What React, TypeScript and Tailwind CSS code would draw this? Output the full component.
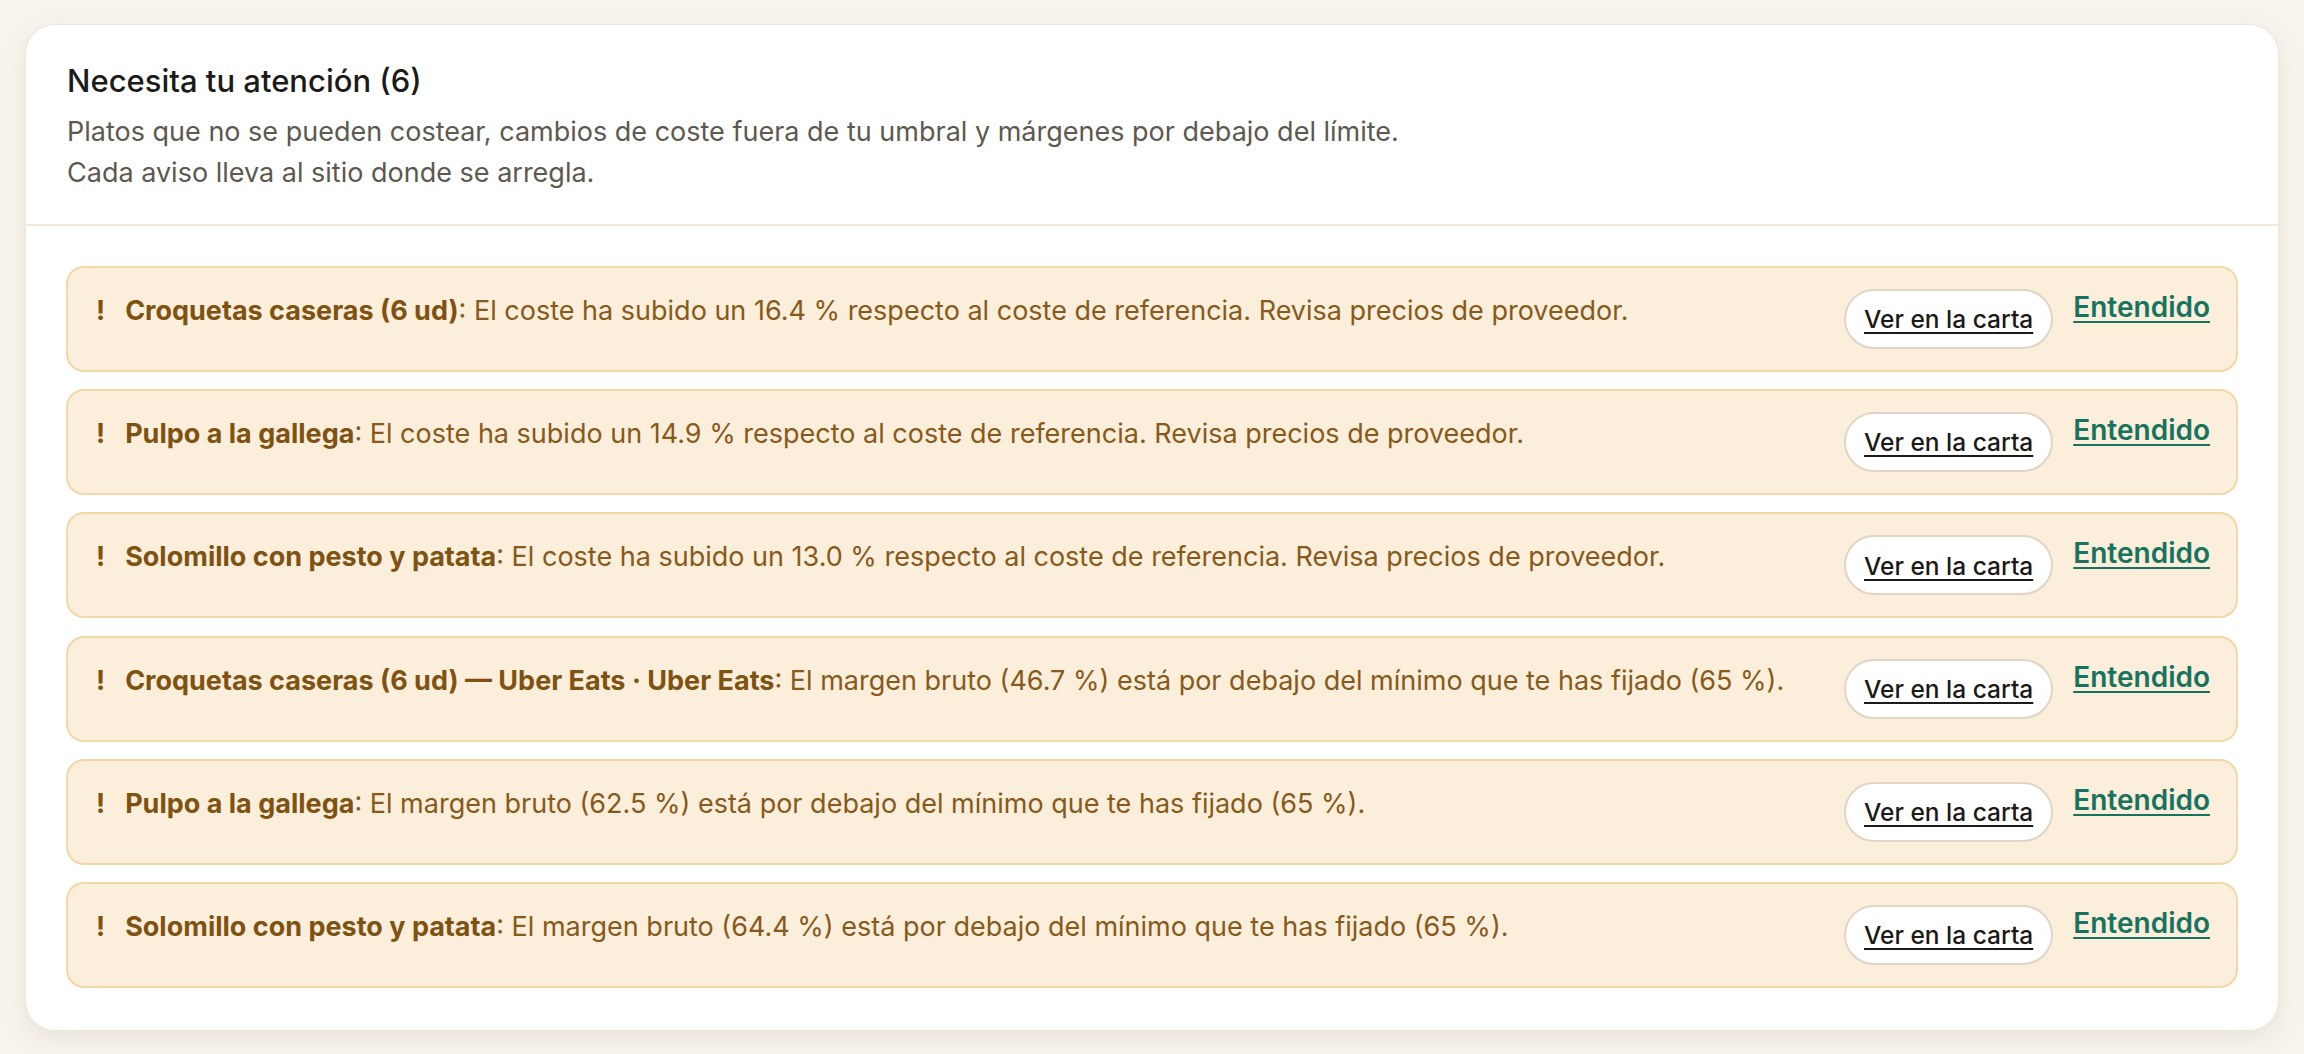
import React from "react";

type Alert = {
  dish: string;
  message: string;
};

const alerts: Alert[] = [
  {
    dish: "Croquetas caseras (6 ud)",
    message:
      "El coste ha subido un 16.4 % respecto al coste de referencia. Revisa precios de proveedor.",
  },
  {
    dish: "Pulpo a la gallega",
    message:
      "El coste ha subido un 14.9 % respecto al coste de referencia. Revisa precios de proveedor.",
  },
  {
    dish: "Solomillo con pesto y patata",
    message:
      "El coste ha subido un 13.0 % respecto al coste de referencia. Revisa precios de proveedor.",
  },
  {
    dish: "Croquetas caseras (6 ud) — Uber Eats · Uber Eats",
    message:
      "El margen bruto (46.7 %) está por debajo del mínimo que te has fijado (65 %).",
  },
  {
    dish: "Pulpo a la gallega",
    message:
      "El margen bruto (62.5 %) está por debajo del mínimo que te has fijado (65 %).",
  },
  {
    dish: "Solomillo con pesto y patata",
    message:
      "El margen bruto (64.4 %) está por debajo del mínimo que te has fijado (65 %).",
  },
];

function AlertRow({ alert }: { alert: Alert }) {
  return (
    <div className="flex items-start gap-[20px] rounded-[18px] border-2 border-[#f1d8a6] bg-[#fbeedb] py-[21px] pl-[28px] pr-[26px]">
      <p className="mt-[2px] flex-1 text-[27px] leading-[40.5px] text-[#88591a]">
        <span className="mr-[20px] font-bold text-[#7f5212]">!</span>
        <strong className="font-bold text-[#7f5212]">{alert.dish}</strong>: {alert.message}
      </p>
      <button className="h-[60px] shrink-0 rounded-full border-2 border-[#e0d5c6] bg-white px-[18px] pt-[1px] text-[24.5px] font-medium text-[#1b1a18] underline decoration-[2px] underline-offset-[4px]">
        Ver en la carta
      </button>
      <button className="mt-[1px] shrink-0 text-[28px] font-semibold leading-[34px] text-[#17735f] underline decoration-[2px] underline-offset-[4px]">
        Entendido
      </button>
    </div>
  );
}

export default function App() {
  return (
    <div className="min-h-screen bg-[#f8f4ed] px-[25px] py-[24px] font-['Inter',_'Liberation_Sans',_sans-serif]">
      <section className="overflow-hidden rounded-[30px] border border-[#efe5d6] bg-white shadow-[0_8px_24px_rgba(110,85,45,0.10)]">
        <header className="border-b-2 border-[#f1e8dc] px-[41px] pb-[31px] pt-[36px]">
          <h2 className="text-[31px] font-medium leading-[40px] text-[#1c1b19]">
            Necesita tu atención (6)
          </h2>
          <p className="mt-[10px] text-[27px] leading-[41px] text-[#5d5850]">
            Platos que no se pueden costear, cambios de coste fuera de tu umbral y márgenes por debajo del límite.
            <br />
            Cada aviso lleva al sitio donde se arregla.
          </p>
        </header>
        <div className="flex flex-col gap-[17.2px] px-[40px] pb-[42px] pt-[40px]">
          {alerts.map((a, i) => (
            <AlertRow key={i} alert={a} />
          ))}
        </div>
      </section>
    </div>
  );
}
